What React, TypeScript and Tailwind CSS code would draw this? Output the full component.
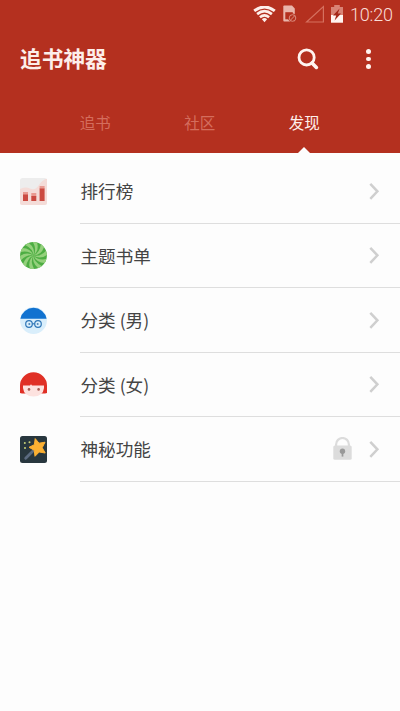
import React from "react";

function Wifi() {
  return (
    <svg className="block h-[17px] w-[23px]" viewBox="0 0 23 17" fill="none" stroke="#fdeeea">
      <path d="M1.2 4.9Q11.5 -3 21.8 4.9" strokeWidth="2.9" />
      <path d="M4.1 8.1Q11.5 2.2 18.9 8.1" strokeWidth="2.7" />
      <path d="M6.9 11.3Q11.5 7.4 16.1 11.3" strokeWidth="2.5" />
      <path d="M8.9 13.2Q11.5 11 14.1 13.2L11.5 16.2Z" fill="#fdeeea" stroke="none" />
    </svg>
  );
}

function Sim() {
  return (
    <svg className="block h-[18px] w-[14px]" viewBox="0 0 14 18">
      <path d="M1.2 0.5H9L11.8 3.5V16.5H1.2Q0.3 16.5 0.3 15.5V1.5Q0.3 .5 1.2 .5Z" fill="#e9b5ab" />
      <path d="M2.3 7.2H9.8V14.3H2.3Z" fill="#b4301f" />
      <circle cx="9.5" cy="13" r="4.4" fill="#b4301f" />
      <circle cx="9.5" cy="13" r="3.3" fill="none" stroke="#db8c7e" strokeWidth="1" />
      <path d="M7.3 15.3L11.8 10.7" stroke="#db8c7e" strokeWidth="1" />
    </svg>
  );
}

function Signal() {
  return (
    <svg className="block h-[18px] w-5" viewBox="0 0 20 18" fill="none">
      <path d="M18.4 1.5V17H1.6Z" stroke="#d5705f" strokeWidth="1.2" />
    </svg>
  );
}

function Battery() {
  return (
    <svg className="block h-[18px] w-3" viewBox="0 0 12 18">
      <path d="M3.2 0H8.8V2H12V18H0V2H3.2Z" fill="#d98375" />
      <path d="M0 10H12V17.5H0Z" fill="#fff4f0" />
      <path d="M8.6 3.6L2 10.4H5.2L3.6 15.6L10 8.6H6.8Z" fill="#a52718" />
    </svg>
  );
}

function ChartIcon() {
  return (
    <svg className="block h-[27px] w-[27px]" viewBox="0 0 27 27">
      <rect width="27" height="27" rx="2.5" fill="#ededed" />
      <path d="M0 11Q6 8.5 10 10.5Q15 13 19 7Q23 1 27 .8V24.5Q27 27 24.5 27H2.5Q0 27 0 24.5Z" fill="#f4dcd8" />
      <path d="M3 14H8V17H3ZM11.3 15H16.3V18.5H11.3ZM19.6 8H24.6V11H19.6Z" fill="#e99a91" />
      <path d="M3 16.5H8V23H3ZM11.3 18H16.3V23H11.3ZM19.6 10.5H24.6V23H19.6Z" fill="#cb4a41" />
    </svg>
  );
}

const blades = [0, 36, 72, 108, 144, 180, 216, 252, 288, 324];

function CandyIcon() {
  return (
    <svg className="block h-[27px] w-[27px]" viewBox="-13.5 -13.5 27 27">
      <circle r="13.4" fill="#4dad43" />
      {blades.map((angle) => (
        <path
          key={angle}
          transform={`rotate(${angle})`}
          d="M0 0Q3.6 -5.5 -.6 -13.4A13.4 13.4 0 0 1 3.6 -12.9Q6 -5 0 0Z"
          fill="#94d07c"
        />
      ))}
    </svg>
  );
}

function BoyIcon() {
  return (
    <svg className="block h-[27px] w-[27px]" viewBox="0 0 27 27">
      <circle cx="13.5" cy="13.5" r="13.4" fill="#d9eefb" />
      <path d="M.4 11.8A13.3 13.3 0 0 1 26.6 11.8Z" fill="#1172d0" />
      <g fill="none" stroke="#2f77b8" strokeWidth="1.2">
        <circle cx="9" cy="17" r="3.3" />
        <circle cx="18" cy="17" r="3.3" />
        <path d="M12.3 16.8H14.7" />
      </g>
      <circle cx="9.3" cy="17" r="1" fill="#4c85b8" />
      <circle cx="17.7" cy="17" r="1" fill="#4c85b8" />
    </svg>
  );
}

function GirlIcon() {
  return (
    <svg className="block h-[27px] w-[27px]" viewBox="0 0 27 27">
      <path d="M0 22V14.5A13.5 13.2 0 0 1 27 14.5V22Q23 23 20 22H7Q4 23 0 22Z" fill="#e03026" />
      <path d="M3 14.5H10L11 13.2L12 14.5H24V17Q23 25.5 13.5 25.5T3 17Z" fill="#fde2df" />
      <circle cx="9" cy="18.4" r="1.3" fill="#a75c53" />
      <circle cx="18.6" cy="18.4" r="1.3" fill="#a75c53" />
    </svg>
  );
}

function WandIcon() {
  return (
    <svg className="block h-[27px] w-[27px]" viewBox="0 0 27 27">
      <rect width="27" height="27" rx="2.5" fill="#28373e" />
      <path d="M5.7 22.2L13.5 14.5" stroke="#5b6b80" strokeWidth="2.8" strokeLinecap="round" />
      <path d="M15.2 2.6L19 7.2L25 6.2L22.2 11.7L25.2 17L19.2 16L15 20.3L14.2 14.2L9 11.3L14.4 8.7Z" fill="#fbb032" stroke="#fbb032" strokeLinejoin="round" />
      <g fill="#c8d27a">
        <circle cx="4.8" cy="7" r="1" />
        <circle cx="9.5" cy="6.3" r="1" />
        <circle cx="5" cy="12" r="1" />
      </g>
    </svg>
  );
}

function Lock() {
  return (
    <svg className="mr-[17px] block h-[23px] w-[19px]" viewBox="0 0 19 23">
      <path d="M3.1 10V7.4A6.4 6.4 0 0 1 15.9 7.4V10" fill="none" stroke="#dcdcdc" strokeWidth="2.2" />
      <rect x=".3" y="8.5" width="18.4" height="14.3" rx="1.5" fill="#dcdcdc" />
      <circle cx="9.5" cy="14.3" r="2.7" fill="#999" />
      <path d="M9.5 14V19.6" stroke="#999" strokeWidth="1.7" />
    </svg>
  );
}

function Chevron() {
  return (
    <svg className="block h-[18px] w-[11px]" viewBox="0 0 11 18" fill="none">
      <path d="M1.3 1.8L8.4 9.3L1.3 16.8" stroke="#cfcfcf" strokeWidth="2.5" />
    </svg>
  );
}

const rows = [
  { label: "排行榜", Icon: ChartIcon, locked: false },
  { label: "主题书单", Icon: CandyIcon, locked: false },
  { label: "分类 (男)", Icon: BoyIcon, locked: false },
  { label: "分类 (女)", Icon: GirlIcon, locked: false },
  { label: "神秘功能", Icon: WandIcon, locked: true },
];

export default function App() {
  return (
    <div className="h-[711px] w-[400px] overflow-hidden bg-[#fdfdfd] font-['Noto_Sans_CJK_SC',sans-serif]">
      <header className="flex h-[153px] flex-col bg-[#b4301f]">
        <div className="flex h-[28px] items-center justify-end pr-[7px]">
          <Wifi />
          <div className="ml-[7px]"><Sim /></div>
          <div className="ml-[8px]"><Signal /></div>
          <div className="mr-[7px] ml-[6px]"><Battery /></div>
          <span className="w-[43px] pt-[2px] font-[Roboto,sans-serif] text-[18px] leading-none font-light tracking-[-0.2px] whitespace-nowrap text-[#f9ddd7]">10:20</span>
        </div>
        <div className="flex h-[62px] items-center pl-5">
          <h1 className="pb-[2px] text-[21.7px] leading-none font-bold whitespace-nowrap text-[#fdeeea]">追书神器</h1>
          <svg className="ml-auto block h-[22px] w-[22px]" viewBox="0 0 22 22" fill="none" stroke="#fff4f0">
            <circle cx="9.6" cy="9.4" r="7.6" strokeWidth="2.8" />
            <path d="M15 15L19.4 19.4" strokeWidth="3.6" strokeLinecap="round" />
          </svg>
          <div className="mr-[29px] ml-[47px] flex w-[5px] flex-col gap-[3px]">
            <i className="h-[4.5px] w-[4.5px] rounded-full bg-[#fff4f0]" />
            <i className="h-[4.5px] w-[4.5px] rounded-full bg-[#fff4f0]" />
            <i className="h-[4.5px] w-[4.5px] rounded-full bg-[#fff4f0]" />
          </div>
        </div>
        <nav className="relative flex h-[63px] pt-[23.5px] pl-[43px] text-center text-[15.5px] leading-[16px] text-[#d46d5d]">
          <span className="w-[104.5px]">追书</span>
          <span className="w-[104.5px]">社区</span>
          <span className="w-[104.5px] text-[#fff0ec]">发现</span>
          <svg className="absolute bottom-0 left-[298px] block h-[6px] w-[12px]" viewBox="0 0 12 6">
            <path d="M0 6L6 0L12 6Z" fill="#fdfdfd" />
          </svg>
        </nav>
      </header>
      <main className="pt-[6px]">
        {rows.map(({ label, Icon, locked }) => (
          <div key={label} className="flex h-[64.5px] items-center pl-5">
            <div className="w-[60px]"><Icon /></div>
            <div className="flex h-full flex-1 items-center border-b border-[#dedede] pr-[20px]">
              <span className="flex-1 pt-px pl-[0.5px] text-[17.6px] leading-none text-[#444]">{label}</span>
              {locked && <Lock />}
              <Chevron />
            </div>
          </div>
        ))}
      </main>
    </div>
  );
}
